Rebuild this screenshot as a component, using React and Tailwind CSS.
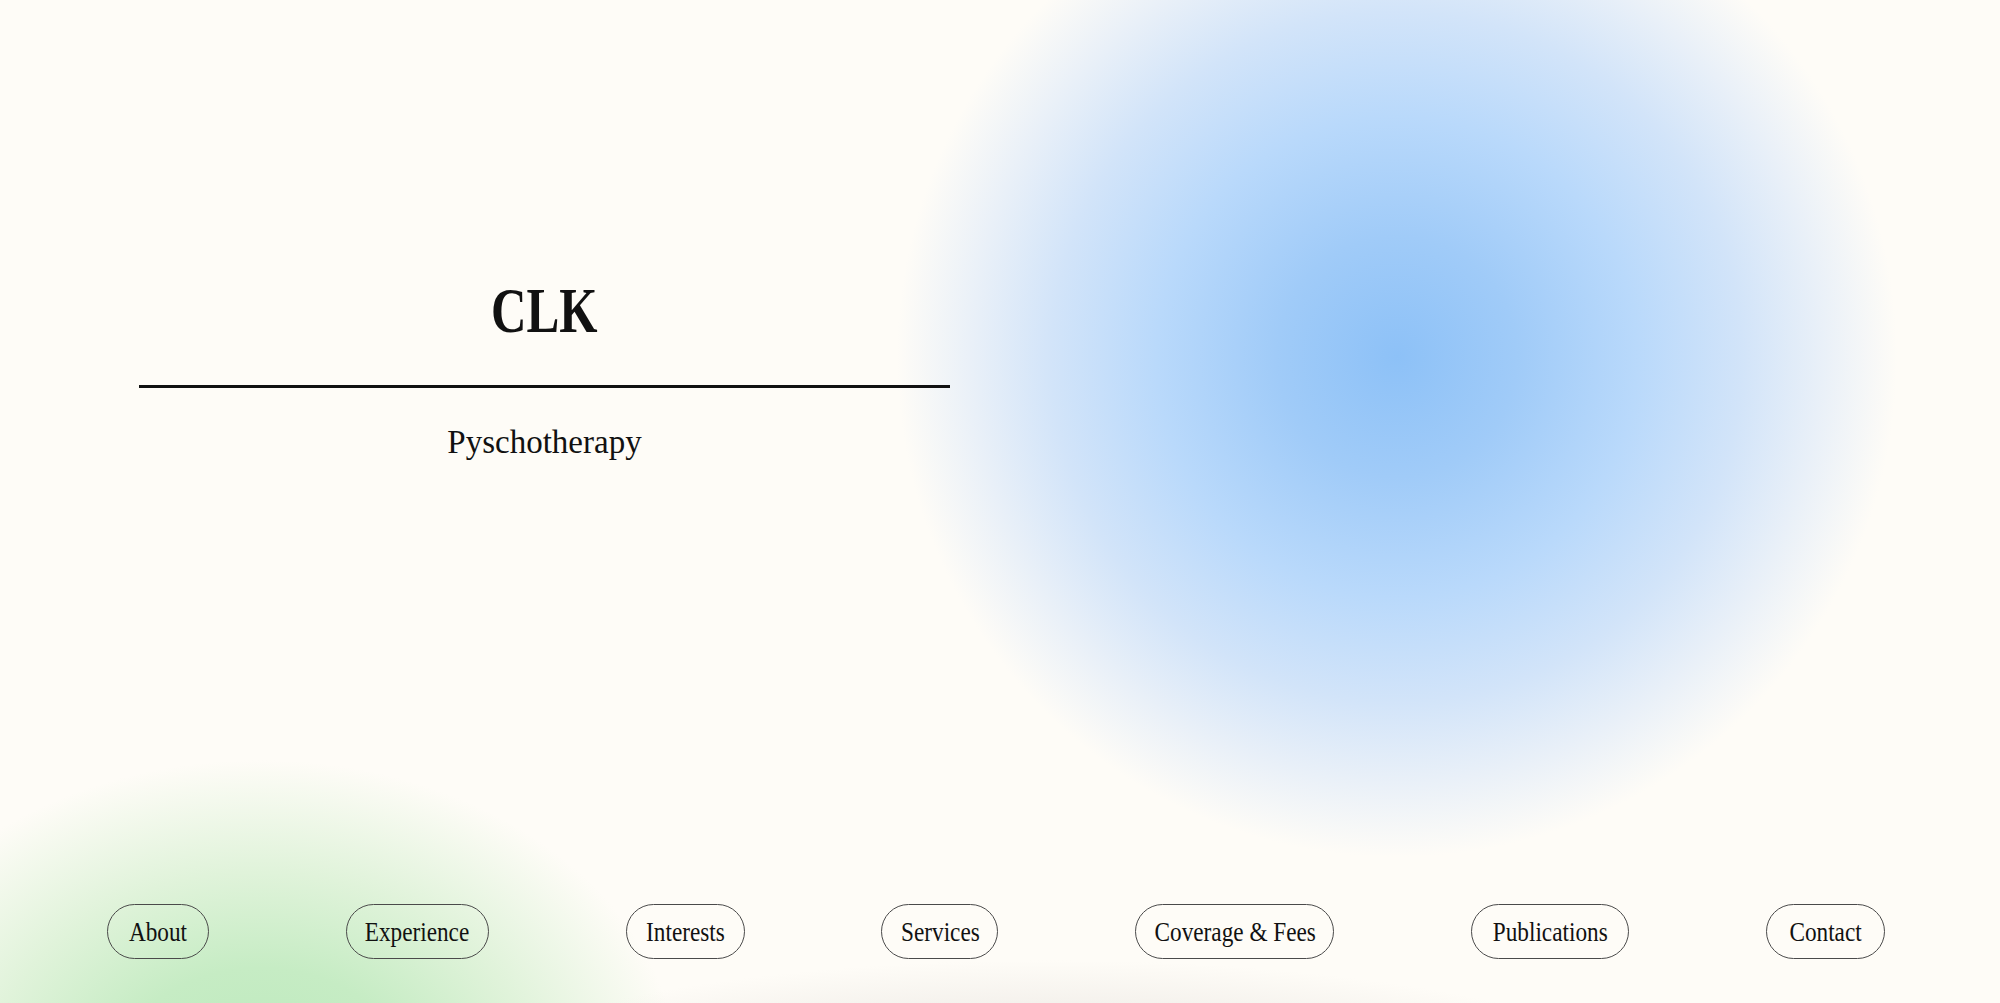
import React from 'react';

const links = [
  { label: 'About', width: 'w-[102px]' },
  { label: 'Experience', width: 'w-[143px]' },
  { label: 'Interests', width: 'w-[119px]' },
  { label: 'Services', width: 'w-[117px]' },
  { label: 'Coverage & Fees', width: 'w-[199px]' },
  { label: 'Publications', width: 'w-[158px]' },
  { label: 'Contact', width: 'w-[119px]' },
];

const App = () => {
  return (
    <div className="relative h-[1003px] w-full overflow-hidden bg-[#fefcf7] text-[#111] font-['Liberation_Serif',serif]">
      {/* Background blobs */}
      <div className="pointer-events-none absolute left-[897px] top-[-143px] h-[1000px] w-[1000px] bg-[radial-gradient(circle_closest-side,#8dc1f7_0%,#a0cbf8_24%,#b9d9fb_48%,#d2e4f9_69%,#e9f0f8_85%,rgba(254,252,247,0)_100%)]" />
      <div className="pointer-events-none absolute left-[-160px] top-[760px] h-[640px] w-[840px] bg-[radial-gradient(closest-side,#bbe9bc_0%,#c6ecc4_35%,#e0f3da_65%,rgba(254,252,247,0)_100%)]" />
      <div className="pointer-events-none absolute left-[370px] top-[960px] h-[340px] w-[1360px] bg-[radial-gradient(closest-side,#e6e2de_0%,#ebe7e3_40%,#f3f0eb_70%,rgba(254,252,247,0)_100%)]" />

      <div className="relative flex h-full flex-col">
        {/* Hero */}
        <main className="flex-1 pl-[139px] pt-[280px]">
          <div className="flex w-[811px] flex-col items-center">
            <h1 className="scale-x-[0.78] text-[63px] font-bold leading-none">CLK</h1>
            <div className="mt-[42px] h-[3px] w-full bg-[#111]" />
            <p className="mt-[38px] text-[33px] leading-none">Pyschotherapy</p>
          </div>
        </main>

        {/* Navigation */}
        <nav className="flex items-center justify-between pb-[44px] pl-[107px] pr-[115px]">
          {links.map((link) => (
            <a
              key={link.label}
              href="#"
              className={`flex h-[55px] ${link.width} items-center justify-center rounded-full border border-[#4a4a4a]`}
            >
              <span className="scale-x-[0.83] whitespace-nowrap text-[28px] leading-none">{link.label}</span>
            </a>
          ))}
        </nav>
      </div>
    </div>
  );
};

export default App;
